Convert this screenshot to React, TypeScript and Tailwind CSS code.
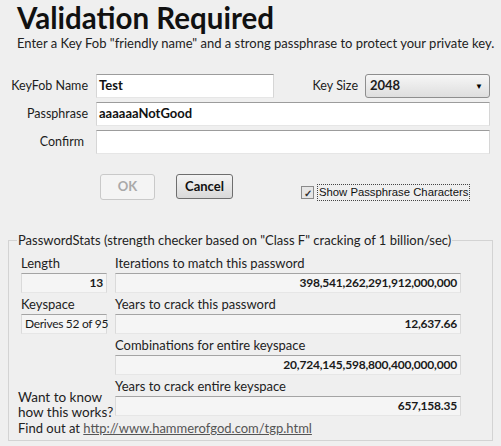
const UI_FONT = "font-['Lato',sans-serif]";

function TextInput({ value, className }: { value?: string; className?: string }) {
  return (
    <div
      className={`flex h-[24px] items-center border border-t-[#9c9c9c] border-x-[#d6d6d6] border-b-[#e6e6e6] bg-white px-[2px] text-[13px] font-bold text-[#111] ${className ?? ""}`}
    >
      {value}
    </div>
  );
}

function StatBox({ value, className }: { value: string; className?: string }) {
  return (
    <div
      className={`flex h-[20px] items-center whitespace-nowrap border border-t-[#a4a4a4] border-x-[#dadada] border-b-[#e6e6e6] bg-[#f5f5f5] px-[3px] text-[12px] font-bold tracking-[-0.2px] text-[#1a1a1a] ${className ?? ""}`}
    >
      {value}
    </div>
  );
}

function FieldLabel({ children }: { children: React.ReactNode }) {
  return <div className="h-[16px] whitespace-nowrap text-[13px] leading-[16px] text-[#222]">{children}</div>;
}

export default function App() {
  return (
    <div className={`h-[446px] w-[501px] overflow-hidden bg-[#efefef] ${UI_FONT} text-[#1c1c1c]`}>
      {/* header */}
      <div className="pl-[17px] pt-[1px]">
        <h1 className="text-[29.5px] font-bold leading-[34px] text-[#111]">Validation Required</h1>
        <p className="whitespace-nowrap text-[13px] leading-[16px] text-[#222]">
          Enter a Key Fob "friendly name" and a strong passphrase to protect your private key.
        </p>
      </div>

      {/* form rows */}
      <div className="mt-[23px] flex flex-col gap-[4px] text-[12.5px]">
        <div className="flex items-center">
          <div className="w-[88px] text-right">KeyFob Name</div>
          <TextInput value="Test" className="ml-[8px] w-[178px]" />
          <div className="w-[84px] text-right">Key Size</div>
          <div className="ml-[7px] flex h-[24px] w-[125px] items-center justify-between rounded-[3px] border border-[#8e8e8e] bg-gradient-to-b from-[#f6f6f6] to-[#dedede] pl-[4px] pr-[6px] text-[13px] font-bold">
            <span>2048</span>
            <span className="text-[8px] text-black">▼</span>
          </div>
        </div>
        <div className="flex items-center">
          <div className="w-[88px] text-right">Passphrase</div>
          <TextInput value="aaaaaaNotGood" className="ml-[8px] w-[394px]" />
        </div>
        <div className="flex items-center">
          <div className="w-[84px] text-right">Confirm</div>
          <TextInput className="ml-[12px] w-[394px]" />
        </div>
      </div>

      {/* buttons */}
      <div className="mt-[20px] flex h-[28px] items-start text-[13px] font-bold">
        <button className="ml-[100px] h-[26px] w-[55px] rounded-[3px] border border-[#c9c9c9] bg-[#f4f4f4] text-[#a9a9a9]">
          OK
        </button>
        <button className="ml-[21px] h-[25px] w-[57px] rounded-[3px] border border-[#6e6e6e] bg-gradient-to-b from-[#f4f4f4] to-[#d9d9d9] text-[#111]">
          Cancel
        </button>
        <div className="ml-[68px] mt-[10px] flex items-center">
          <div className="flex h-[13px] w-[13px] items-center justify-center border border-[#8a8a8a] bg-[#e6e6e6] text-[10px] leading-none text-[#333]">
            ✓
          </div>
          <div className="ml-[3px] whitespace-nowrap border border-dotted border-[#444] px-[1px] font-['Liberation_Sans',sans-serif] text-[11.3px] font-normal leading-[15px] text-[#111]">
            Show Passphrase Characters
          </div>
        </div>
      </div>

      {/* stats group */}
      <fieldset className="mx-[8px] mt-[30px] h-[209px] border border-[#d3d3d3] bg-[#efefef] pl-[9px] pr-[29px]">
        <legend className="-ml-[1px] whitespace-nowrap px-[1px] text-[13px] leading-[16px] text-[#222]">
          PasswordStats (strength checker based on "Class F" cracking of 1 billion/sec)
        </legend>
        <div className="mt-[7px] grid grid-cols-[86px_346px] gap-x-[8px] gap-y-[3px] pl-[3px]">
          <div className="flex flex-col gap-[2px]">
            <FieldLabel>Length</FieldLabel>
            <StatBox value="13" className="justify-end" />
          </div>
          <div className="flex flex-col gap-[2px]">
            <FieldLabel>Iterations to match this password</FieldLabel>
            <StatBox value="398,541,262,291,912,000,000" className="justify-end" />
          </div>
          <div className="flex flex-col gap-[2px]">
            <FieldLabel>Keyspace</FieldLabel>
            <StatBox value="Derives 52 of 95" className="font-normal tracking-[-0.3px]" />
          </div>
          <div className="flex flex-col gap-[2px]">
            <FieldLabel>Years to crack this password</FieldLabel>
            <StatBox value="12,637.66" className="justify-end" />
          </div>
          <div />
          <div className="flex flex-col gap-[2px]">
            <FieldLabel>Combinations for entire keyspace</FieldLabel>
            <StatBox value="20,724,145,598,800,400,000,000" className="justify-end" />
          </div>
          <div className="relative">
            <div className="absolute -left-[3px] top-[12px] w-[100px] text-[13.5px] leading-[15px] text-[#222]">
              Want to know how this works?
            </div>
          </div>
          <div className="flex flex-col gap-[2px]">
            <FieldLabel>Years to crack entire keyspace</FieldLabel>
            <StatBox value="657,158.35" className="justify-end" />
          </div>
        </div>
        <div className="mt-[5px] whitespace-nowrap text-[13px] leading-[15px] text-[#222]">
          Find out at{" "}
          <a className="text-[#555] underline" href="#">
            http://www.hammerofgod.com/tgp.html
          </a>
        </div>
      </fieldset>
    </div>
  );
}
